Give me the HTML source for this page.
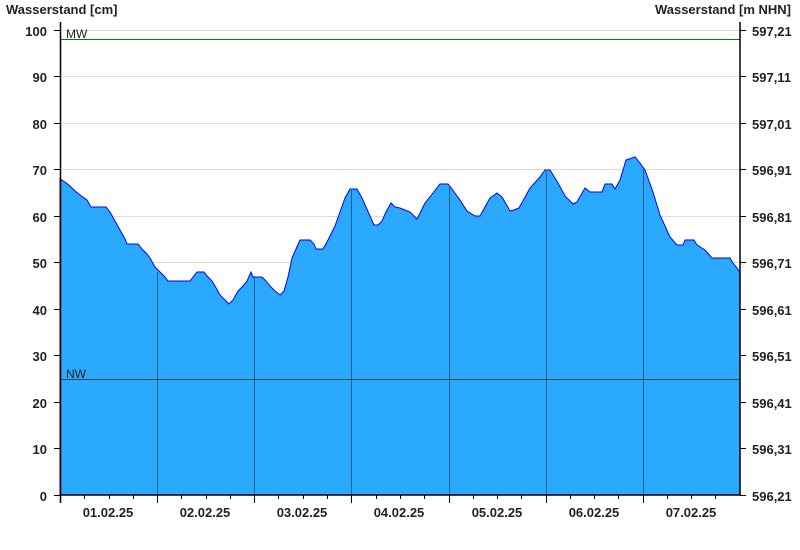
<!DOCTYPE html>
<html><head><style>
body{margin:0;background:#fff;}
svg{display:block;font-family:"Liberation Sans",Arial,sans-serif;font-weight:bold;font-size:13px;fill:#222;}
</style></head><body>
<svg width="800" height="550" viewBox="0 0 800 550">
<text x="6" y="14">Wasserstand [cm]</text>
<text x="791" y="14" text-anchor="end">Wasserstand [m NHN]</text>
<g stroke="#ddd" stroke-width="1">
<line x1="61" y1="30.5" x2="740" y2="30.5"/><line x1="61" y1="76.5" x2="740" y2="76.5"/><line x1="61" y1="123.5" x2="740" y2="123.5"/><line x1="61" y1="169.5" x2="740" y2="169.5"/><line x1="61" y1="216.5" x2="740" y2="216.5"/><line x1="61" y1="262.5" x2="740" y2="262.5"/><line x1="61" y1="309.5" x2="740" y2="309.5"/><line x1="61" y1="355.5" x2="740" y2="355.5"/><line x1="61" y1="402.5" x2="740" y2="402.5"/><line x1="61" y1="448.5" x2="740" y2="448.5"/>
</g>
<polygon fill="#2aa9ff" stroke="#0000ff" stroke-width="1" points="60,495 60,179 65,182 70,186 75,191 80,195 87,200 91,207 106,207 110,212 115,221 120,230 125,239 127,244 138,244 142,249 147,254 150,258 155,267 160,272 165,277 168,281 190,281 193,277 197,272 204,272 208,277 212,281 215,286 220,295 225,300 229,304 233,300 238,291 243,286 247,281 251,272 253,277 262,277 266,281 270,286 275,291 280,295 284,291 288,277 292,258 296,249 300,240 310,240 314,244 316,249 323,249 328,240 335,226 340,212 345,198 350,189 357,189 362,198 366,207 370,216 374,225 378,225 382,221 386,212 391,203 395,207 400,208 410,212 417,219 425,203 433,193 440,184 448,184 452,189 460,200 467,211 475,216 480,216 490,198 497,193 502,197 510,211 514,210 519,208 530,188 540,177 545,170 550,170 558,183 565,196 573,204 577,202 585,188 590,192 602,192 605,184 612,184 615,189 620,180 626,160 635,157 640,163 645,170 653,192 660,215 670,237 677,245 683,245 685,240 694,240 697,245 705,250 712,258 730,258 733,263 737,268 740,273 740,495"/>
<g stroke="#1c5f8f" stroke-width="1">
<line x1="157.5" y1="272" x2="157.5" y2="495"/><line x1="254.5" y1="276" x2="254.5" y2="495"/><line x1="351.5" y1="190" x2="351.5" y2="495"/><line x1="449.5" y1="186" x2="449.5" y2="495"/><line x1="546.5" y1="172" x2="546.5" y2="495"/><line x1="643.5" y1="168" x2="643.5" y2="495"/>
</g>
<line x1="61" y1="39.5" x2="740" y2="39.5" stroke="#1a6a1a"/>
<line x1="61" y1="379.5" x2="740" y2="379.5" stroke="#1a4a3a"/>
<text x="66" y="38" style="font-weight:normal;font-size:12px">MW</text>
<text x="66" y="378" style="font-weight:normal;font-size:12px">NW</text>
<g stroke="#000" stroke-width="1.5">
<line x1="60.5" y1="22" x2="60.5" y2="503"/><line x1="740" y1="22" x2="740" y2="495"/><line x1="60" y1="495" x2="740" y2="495"/>
</g>
<g stroke="#000" stroke-width="1">
<path d="M54 30.5H60M54 76.5H60M54 123.5H60M54 169.5H60M54 216.5H60M54 262.5H60M54 309.5H60M54 355.5H60M54 402.5H60M54 448.5H60M54 495.5H60"/>
<path d="M740 30.5H746M740 76.5H746M740 123.5H746M740 169.5H746M740 216.5H746M740 262.5H746M740 309.5H746M740 355.5H746M740 402.5H746M740 448.5H746M740 495.5H746"/>
<path d="M157.5 495V503M254.5 495V503M351.5 495V503M449.5 495V503M546.5 495V503M643.5 495V503M84.5 495V499M109.5 495V499M133.5 495V499M181.5 495V499M206.5 495V499M230.5 495V499M278.5 495V499M303.5 495V499M327.5 495V499M376.5 495V499M400.5 495V499M424.5 495V499M473.5 495V499M497.5 495V499M521.5 495V499M570.5 495V499M594.5 495V499M618.5 495V499M667.5 495V499M691.5 495V499M715.5 495V499"/>
</g>
<g text-anchor="end">
<text x="47" y="36">100</text><text x="47" y="82">90</text><text x="47" y="129">80</text><text x="47" y="175">70</text><text x="47" y="222">60</text><text x="47" y="268">50</text><text x="47" y="315">40</text><text x="47" y="361">30</text><text x="47" y="408">20</text><text x="47" y="454">10</text><text x="47" y="501">0</text>
</g>
<g>
<text x="752" y="36">597,21</text><text x="752" y="82">597,11</text><text x="752" y="129">597,01</text><text x="752" y="175">596,91</text><text x="752" y="222">596,81</text><text x="752" y="268">596,71</text><text x="752" y="315">596,61</text><text x="752" y="361">596,51</text><text x="752" y="408">596,41</text><text x="752" y="454">596,31</text><text x="752" y="501">596,21</text>
</g>
<g text-anchor="middle" style="font-size:13px">
<text x="108" y="517">01.02.25</text><text x="205" y="517">02.02.25</text><text x="302" y="517">03.02.25</text><text x="399" y="517">04.02.25</text><text x="497" y="517">05.02.25</text><text x="594" y="517">06.02.25</text><text x="691" y="517">07.02.25</text>
</g>
</svg>
</body></html>
